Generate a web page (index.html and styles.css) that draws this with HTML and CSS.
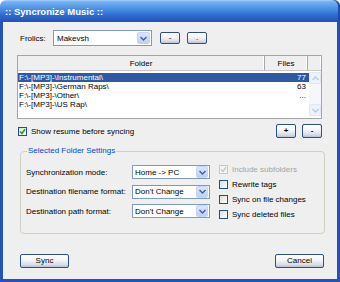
FILE: index.html
```html
<!DOCTYPE html>
<html>
<head>
<meta charset="utf-8">
<link rel="stylesheet" href="styles.css">
</head>
<body>
<div class="window">
  <div class="titlebar">:: Syncronize Music ::</div>
  <div class="client">
    <div class="profile-row">
      <span class="profile-label">Frolics:</span>
      <div class="combo combo-profile">
        <span class="combo-text">Makevsh</span>
        <span class="drop"><svg width="7" height="5" viewBox="0 0 7 5"><path d="M0.5 1 L3.5 4 L6.5 1" fill="none" stroke="#4d6185" stroke-width="1.4"/></svg></span>
      </div>
      <button class="btn btn-small">-</button>
      <button class="btn btn-small">.</button>
    </div>

    <div class="list">
      <div class="list-head">
        <div class="hcell col-folder">Folder</div>
        <div class="hcell col-files">Files</div>
        <div class="hcell col-scroll"></div>
      </div>
      <div class="list-body">
        <div class="rows">
          <div class="row selected"><span class="cell-folder">F:\-[MP3]-\Instrumental\</span><span class="cell-files">77</span></div>
          <div class="row"><span class="cell-folder">F:\-[MP3]-\German Raps\</span><span class="cell-files">63</span></div>
          <div class="row"><span class="cell-folder">F:\-[MP3]-\Other\</span><span class="cell-files">...</span></div>
          <div class="row"><span class="cell-folder">F:\-[MP3]-\US Rap\</span><span class="cell-files"></span></div>
        </div>
        <div class="scrollbar">
          <span class="sb-btn"><svg width="7" height="5" viewBox="0 0 7 5"><path d="M0.5 4 L3.5 1 L6.5 4" fill="none" stroke="#b8c8e6" stroke-width="1.3"/></svg></span>
          <span class="sb-track"></span>
          <span class="sb-btn"><svg width="7" height="5" viewBox="0 0 7 5"><path d="M0.5 1 L3.5 4 L6.5 1" fill="none" stroke="#b8c8e6" stroke-width="1.3"/></svg></span>
        </div>
      </div>
    </div>

    <div class="options-row">
      <div class="check">
        <span class="box"><svg width="7" height="7" viewBox="0 0 7 7"><path d="M1 3.5 L3 5.5 L6 1.2" fill="none" stroke="#21a121" stroke-width="1.6"/></svg></span>
        <span>Show resume before syncing</span>
      </div>
      <div class="list-buttons">
        <button class="btn btn-small btn-tall">+</button>
        <button class="btn btn-small btn-tall">-</button>
      </div>
    </div>

    <fieldset class="group">
      <legend class="group-title">Selected Folder Settings</legend>
      <div class="group-body">
        <div class="fields">
          <div class="field">
            <span class="field-label">Synchronization mode:</span>
            <div class="combo combo-field"><span class="combo-text">Home -&gt; PC</span><span class="drop"><svg width="7" height="5" viewBox="0 0 7 5"><path d="M0.5 1 L3.5 4 L6.5 1" fill="none" stroke="#4d6185" stroke-width="1.4"/></svg></span></div>
          </div>
          <div class="field">
            <span class="field-label">Destination filename format:</span>
            <div class="combo combo-field"><span class="combo-text">Don't Change</span><span class="drop"><svg width="7" height="5" viewBox="0 0 7 5"><path d="M0.5 1 L3.5 4 L6.5 1" fill="none" stroke="#4d6185" stroke-width="1.4"/></svg></span></div>
          </div>
          <div class="field">
            <span class="field-label">Destination path format:</span>
            <div class="combo combo-field"><span class="combo-text">Don't Change</span><span class="drop"><svg width="7" height="5" viewBox="0 0 7 5"><path d="M0.5 1 L3.5 4 L6.5 1" fill="none" stroke="#4d6185" stroke-width="1.4"/></svg></span></div>
          </div>
        </div>
        <div class="checks">
          <div class="check disabled">
            <span class="box"><svg width="7" height="7" viewBox="0 0 7 7"><path d="M1 3.5 L3 5.5 L6 1.2" fill="none" stroke="#c4c4c4" stroke-width="1.4"/></svg></span>
            <span>Include subfolders</span>
          </div>
          <div class="check"><span class="box"></span><span>Rewrite tags</span></div>
          <div class="check"><span class="box"></span><span>Sync on file changes</span></div>
          <div class="check"><span class="box"></span><span>Sync deleted files</span></div>
        </div>
      </div>
    </fieldset>

    <div class="footer">
      <button class="btn btn-wide">Sync</button>
      <button class="btn btn-wide">Cancel</button>
    </div>
  </div>
</div>
</body>
</html>
```

FILE: styles.css
```css
* { box-sizing: border-box; }

html, body {
  margin: 0;
  padding: 0;
  background: #ffffff;
}

body {
  font-family: "Liberation Sans", Arial, sans-serif;
  font-size: 8px;
  color: #000;
}

.window {
  width: 340px;
  height: 282px;
  display: flex;
  flex-direction: column;
}

.titlebar {
  height: 22px;
  flex: none;
  padding-left: 5px;
  line-height: 24px;
  color: #fff;
  font-weight: bold;
  font-size: 9.5px;
  border-radius: 6px 6px 0 0;
  background: linear-gradient(#a9d0f8 0px, #74b0f2 2px, #5b9de9 6px, #3f84e0 11px, #2e6cd2 15px, #2758bd 20px, #2350b3 22px);
  box-shadow: inset -2px 0 0 #1e4aa8;
}

.client {
  flex: 1;
  background: #efefef;
  border: 3px solid #2352b8;
  border-top: none;
  padding: 8px 15px 0 14px;
  display: flex;
  flex-direction: column;
}

/* profile row */
.profile-row {
  display: flex;
  align-items: center;
  height: 16px;
}

.profile-label {
  width: 36px;
  padding-left: 3px;
}

.combo {
  display: flex;
  align-items: center;
  background: #fff;
  border: 1px solid #7f9db9;
}

.combo-text {
  flex: 1;
  padding-left: 2px;
  white-space: nowrap;
  overflow: hidden;
}

.drop {
  width: 13px;
  height: 100%;
  display: flex;
  align-items: center;
  justify-content: center;
  border: 1px solid #c6d6f6;
  border-radius: 2px;
  background: linear-gradient(#dae6fd, #bdd0f8);
}

.combo-profile {
  width: 99px;
  height: 16px;
  padding: 1px;
}

.btn {
  font-family: "Liberation Sans", Arial, sans-serif;
  font-size: 8px;
  color: #000;
  padding: 0;
  margin: 0;
  border: 1px solid #2d4f86;
  border-radius: 2px;
  background: linear-gradient(#ffffff 0%, #f3f4f8 45%, #d8dde8 80%, #b8c2d4 100%);
  line-height: 10px;
}

.btn-small {
  width: 20px;
  height: 12px;
}

.profile-row .btn-small:first-of-type { margin-left: 8px; }
.profile-row .btn-small + .btn-small { margin-left: 7px; }

.btn-tall { height: 14px; font-weight: bold; }

/* list */
.list {
  margin-top: 9px;
  height: 64px;
  border: 1px solid #a5a5a5;
  background: #fff;
  display: flex;
  flex-direction: column;
}

.list-head {
  display: flex;
  height: 15px;
  background: #efefef;
  border-bottom: 1px solid #c8c8c8;
}

.hcell {
  display: flex;
  align-items: center;
  justify-content: center;
  border-right: 1px solid #a8a8a8;
  box-shadow: inset -1px 0 0 #fff;
}

.col-folder { width: 247px; }
.col-files { width: 43px; }
.col-scroll { flex: 1; border-right: none; }

.list-body {
  flex: 1;
  display: flex;
  padding-top: 1px;
}

.rows {
  flex: 1;
  padding-top: 1px;
}

.row {
  display: flex;
  height: 9px;
  line-height: 9px;
  white-space: nowrap;
}

.row.selected {
  background: #3059a3;
  color: #fff;
}

.cell-folder {
  width: 248px;
  padding-left: 1px;
}

.cell-files {
  flex: 1;
  text-align: right;
  padding-right: 3px;
}

.scrollbar {
  width: 12px;
  margin-bottom: 2px;
  display: flex;
  flex-direction: column;
  background: #f6f7fb;
}

.sb-btn {
  height: 12px;
  display: flex;
  align-items: center;
  justify-content: center;
  border: 1px solid #e1e8f5;
  border-radius: 2px;
  background: #eef2fb;
}

.sb-track { flex: 1; }

/* options row */
.options-row {
  display: flex;
  align-items: center;
  height: 14px;
  margin-top: 5px;
}

.check {
  display: flex;
  align-items: center;
  gap: 4px;
  white-space: nowrap;
}

.options-row .check { margin-left: 1px; }

.box {
  width: 9px;
  height: 9px;
  flex: none;
  display: flex;
  align-items: center;
  justify-content: center;
  border: 1px solid #1c5180;
  background: linear-gradient(135deg, #dcdcd7, #ffffff);
}

.list-buttons {
  margin-left: auto;
  display: flex;
  gap: 6px;
}

/* group */
.group {
  margin: 8px -3px 0 3px;
  padding: 0 0 0 5px;
  height: 88px;
  min-width: 0;
  border: 1px solid #d0d0bf;
  border-radius: 4px;
}

.group-title {
  padding: 0 1px;
  margin-left: 1px;
  color: #0046d5;
  line-height: 10px;
}

.group-body {
  display: flex;
  margin-top: 6px;
}

.fields {
  display: flex;
  flex-direction: column;
  gap: 5.5px;
  margin-top: 3px;
}

.field {
  display: flex;
  align-items: center;
  height: 14px;
}

.field-label {
  width: 106px;
  white-space: nowrap;
}

.combo-field {
  width: 78px;
  height: 14px;
  padding: 0 1px 0 0;
}

.combo-field .drop { height: 12px; width: 12px; }

.checks {
  margin-left: 9px;
  display: flex;
  flex-direction: column;
}

.checks .check {
  height: 15px;
}

.check.disabled { color: #a3a3a3; }
.check.disabled .box { border-color: #c6c6c6; background: #f4f4f4; }

/* footer */
.footer {
  display: flex;
  justify-content: space-between;
  margin: 20px -2px 0 3px;
}

.btn-wide {
  width: 49px;
  height: 14px;
}
```
